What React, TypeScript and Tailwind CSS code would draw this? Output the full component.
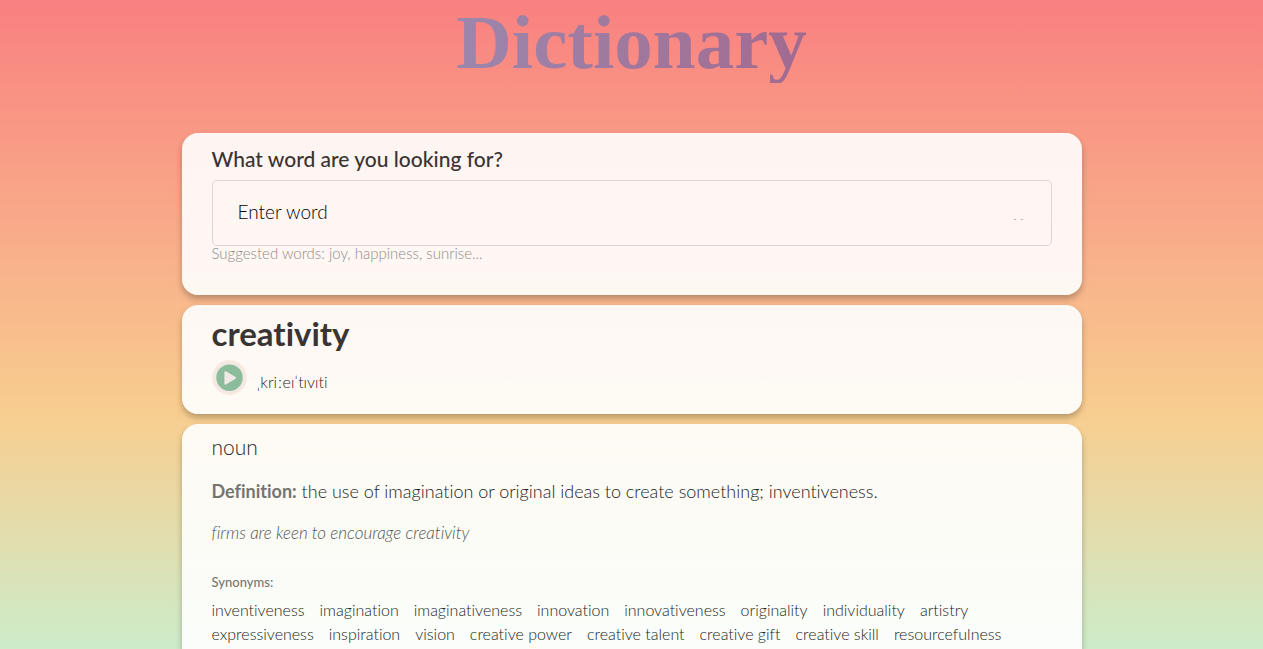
import React from "react";

const synonyms = [
  "inventiveness",
  "imagination",
  "imaginativeness",
  "innovation",
  "innovativeness",
  "originality",
  "individuality",
  "artistry",
  "expressiveness",
  "inspiration",
  "vision",
  "creative power",
  "creative talent",
  "creative gift",
  "creative skill",
  "resourcefulness",
];

const card =
  "rounded-2xl bg-white/90 px-[30px] shadow-[0_4px_6px_rgba(0,0,0,0.25)]";

function SearchCard() {
  return (
    <section className={`${card} pt-[11px] pb-[34px]`}>
      <form onSubmit={(e) => e.preventDefault()}>
        <label
          htmlFor="word"
          className="block text-[21px] leading-[30px] font-medium text-[#3a3333]"
        >
          What word are you looking for?
        </label>
        <div className="mt-[6px] flex h-[66px] items-center rounded-[5px] border border-[#dfd5d4] pr-6 pl-[25px]">
          <input
            id="word"
            type="search"
            placeholder="Enter word"
            className="min-w-0 flex-1 bg-transparent pb-[2px] text-[19px] font-light text-black outline-none placeholder:text-black placeholder:opacity-100"
          />
          <button type="submit" aria-label="Search" className="h-4 w-4">
            <svg viewBox="0 0 16 16" className="block h-4 w-4" fill="#b9b3b2">
              <rect x="3" y="14" width="2" height="1" />
              <rect x="10" y="14" width="2" height="1" />
            </svg>
          </button>
        </div>
      </form>
      <p className="text-[15px] leading-[15px] font-light text-[#918b89]">
        Suggested words: joy, happiness, sunrise...
      </p>
    </section>
  );
}

function WordCard() {
  return (
    <section className={`${card} pt-[10px] pb-[19px]`}>
      <h2 className="text-[33px] leading-9 font-bold text-[#3a3532]">
        creativity
      </h2>
      <div className="mt-[9px] flex h-[35px] items-center gap-[10px]">
        <button
          type="button"
          aria-label="Play pronunciation"
          className="h-[35px] w-[35px] rounded-full"
        >
          <svg viewBox="0 0 35 35" className="block h-full w-full">
            <circle cx="17.5" cy="17.5" r="17.4" fill="#fbe9df" />
            <circle cx="17.5" cy="17.5" r="16" fill="#f1e9e3" />
            <circle cx="17.5" cy="17.7" r="13.2" fill="#8bbc9c" />
            <path
              d="M13.4 12.2 L23 17.8 L13.4 23.6 Z"
              fill="#f1e9e3"
              stroke="#f1e9e3"
              strokeWidth="2"
              strokeLinejoin="round"
            />
          </svg>
        </button>
        <span className="pt-2 text-base font-light text-[#2a2522]">
          ˌkriːeɪˈtɪvɪti
        </span>
      </div>
    </section>
  );
}

function MeaningCard() {
  return (
    <section className="flex-1 rounded-t-2xl bg-white/90 px-[30px] pt-[11px] shadow-[0_4px_6px_rgba(0,0,0,0.25)]">
      <h3 className="text-[21px] leading-6 font-light text-[#2a2723]">noun</h3>
      <p className="mt-5 text-lg leading-6 font-light text-[#232320]">
        <strong className="font-bold text-[#757570]">Definition:</strong> the use
        of imagination or original ideas to create something; inventiveness.
      </p>
      <p className="mt-[18px] text-[17px] leading-6 font-light text-[#555552] italic">
        firms are keen to encourage creativity
      </p>
      <h4 className="mt-[25px] text-[13px] leading-6 font-medium text-[#757773]">
        Synonyms:
      </h4>
      <ul className="mt-1 flex flex-wrap gap-x-[15px] text-base leading-6 font-light text-[#232623]">
        {synonyms.map((word) => (
          <li key={word}>{word}</li>
        ))}
      </ul>
    </section>
  );
}

export default function App() {
  return (
    <div className="flex min-h-screen flex-col bg-[linear-gradient(180deg,#f98080_0%,#f8ce90_64%,#cdecca_100%)] font-['Lato','Open_Sans',sans-serif] [font-variant-ligatures:none]">
      <header className="flex justify-center pt-[11px] pb-[50px]">
        <h1 className="bg-linear-to-r from-[#9c86ac] to-[#a26a90] bg-clip-text pb-[10px] font-['Liberation_Serif',serif] text-[77px] leading-[62px] font-bold text-transparent">
          Dictionary
        </h1>
      </header>
      <main className="mx-auto flex w-full max-w-[900px] flex-1 flex-col gap-[10px]">
        <SearchCard />
        <WordCard />
        <MeaningCard />
      </main>
    </div>
  );
}
